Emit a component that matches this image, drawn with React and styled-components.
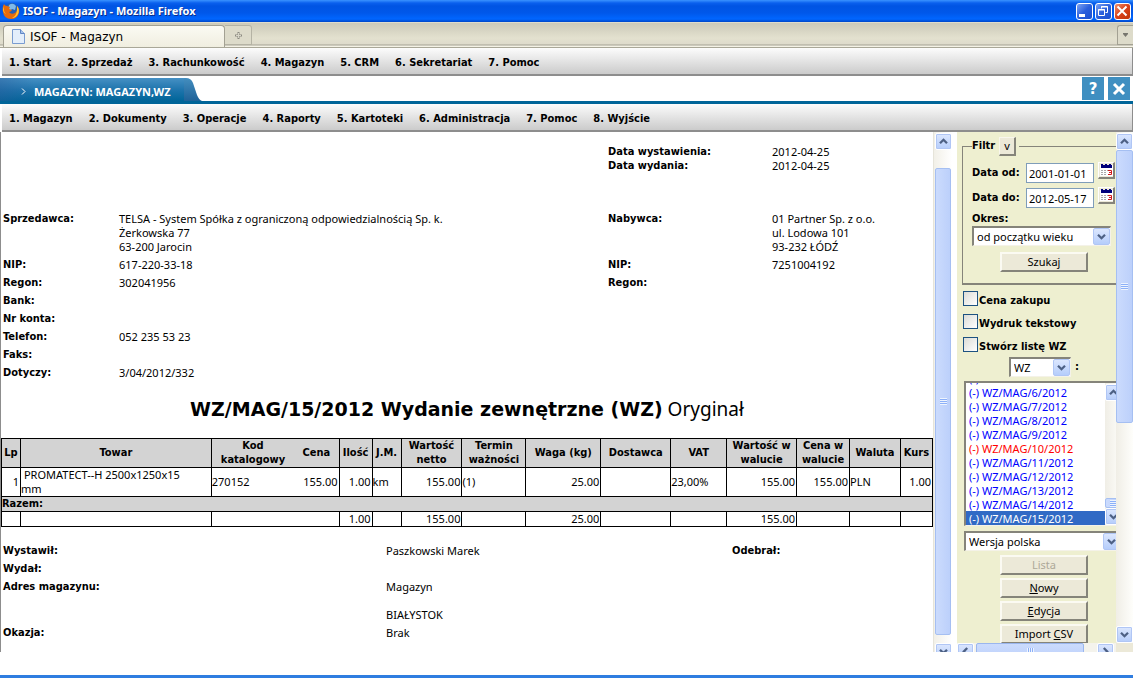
import { Fragment } from "react";
import styled, { createGlobalStyle } from "styled-components";

const REGULAR = '"Noto Sans", sans-serif';
const BOLD = '"DejaVu Sans Condensed", "DejaVu Sans", sans-serif';

const MAIN_MENU = ["Start", "Sprzedaż", "Rachunkowość", "Magazyn", "CRM", "Sekretariat", "Pomoc"];
const MODULE_MENU = ["Magazyn", "Dokumenty", "Operacje", "Raporty", "Kartoteki", "Administracja", "Pomoc", "Wyjście"];

const DATES = [
    ["Data wystawienia:", "2012-04-25"],
    ["Data wydania:", "2012-04-25"],
];

const PARTIES = [
    ["Sprzedawca:", ["TELSA - System Spółka z ograniczoną odpowiedzialnością Sp. k.", "Żerkowska 77", "63-200 Jarocin"],
        "Nabywca:", ["01 Partner Sp. z o.o.", "ul. Lodowa 101", "93-232 ŁÓDŹ"]],
    ["NIP:", ["617-220-33-18"], "NIP:", ["7251004192"]],
    ["Regon:", ["302041956"], "Regon:", []],
    ["Bank:", [], "", []],
    ["Nr konta:", [], "", []],
    ["Telefon:", ["052 235 53 23"], "", []],
    ["Faks:", [], "", []],
    ["Dotyczy:", ["3/04/2012/332"], "", []],
];

const COLUMNS = [
    { label: "Lp", width: 19 },
    { label: "Towar", width: 191 },
    { label: "Kod katalogowy", width: 83, open: true },
    { label: "Cena", width: 45 },
    { label: "Ilość", width: 33 },
    { label: "J.M.", width: 29 },
    { label: "Wartość netto", width: 61 },
    { label: "Termin ważności", width: 64 },
    { label: "Waga (kg)", width: 75 },
    { label: "Dostawca", width: 70 },
    { label: "VAT", width: 56 },
    { label: "Wartość w walucie", width: 70 },
    { label: "Cena w walucie", width: 53 },
    { label: "Waluta", width: 51 },
    { label: "Kurs", width: 32 },
];
const TABLE_WIDTH = COLUMNS.reduce((sum, c) => sum + c.width, 0);
const NUMERIC = [0, 3, 4, 6, 8, 11, 12, 14];

const ITEM = ["1", "PROMATECT--H 2500x1250x15\nmm", "270152", "155.00", "1.00", "km", "155.00", "(1)", "25.00", "", "23,00%", "155.00", "155.00", "PLN", "1.00"];
const TOTALS = ["", "", "", "", "1.00", "", "155.00", "", "25.00", "", "", "155.00", "", "", ""];

const DOCUMENTS = [5, 6, 7, 8, 9, 10, 11, 12, 13, 14, 15];

const Arrow = ({ dir }) => {
    const turn = { up: 0, right: 90, down: 180, left: 270 }[dir];
    return (
        <svg width="9" height="9" viewBox="0 0 9 9" aria-hidden="true">
            <path d="M1 6.2 4.5 2.8 8 6.2" transform={`rotate(${turn} 4.5 4.5)`}
                fill="none" stroke="#4d6185" strokeWidth="2.3" />
        </svg>
    )
}

const VerticalScroll = ({ className, thumbStart, thumbSize, rest }) => (
    <Track className={className}>
        <ScrollButton type="button" aria-label="Przewiń w górę"><Arrow dir="up" /></ScrollButton>
        <Space $grow={thumbStart} />
        <Thumb $grow={thumbSize}><Grip /></Thumb>
        <Space $grow={rest} />
        <ScrollButton type="button" aria-label="Przewiń w dół"><Arrow dir="down" /></ScrollButton>
    </Track>
)

const Menu = ({ items, label }) => (
    <MenuBar aria-label={label}>
        {items.map((item, i) => <MenuLink href="#" key={item}>{i + 1}. {item}</MenuLink>)}
    </MenuBar>
)

const DateField = ({ id, label, value }) => (
    <FieldRow>
        <FieldLabel htmlFor={id}>{label}</FieldLabel>
        <DateInput id={id} defaultValue={value} />
        <CalendarButton type="button" aria-label={"Kalendarz " + label}>
            <svg width="13" height="13" viewBox="0 0 13 13">
                <path fill="#fff" d="M0 1h13v11H0z" />
                <path fill="#00007b" d="M1 1h11v3H1zM1 0h2v1H1zM5 0h2v1H5zM9 0h2v1H9z" />
                <path fill="#aaa" d="M1 6h2v1H1zM4 6h2v1H4zM1 8h2v1H1zM4 8h2v1H4zM1 10h2v1H1zM4 10h2v1H4zM7 6h1v1H7z" />
                <path fill="none" stroke="#d31818" d="M8 6.5h3.5v4H8M9 8.5h2" />
            </svg>
        </CalendarButton>
    </FieldRow>
)

const DropDown = ({ label, options, size }) => (
    <SelectBox $size={size}>
        <Select aria-label={label}>
            {options.map(o => <option key={o}>{o}</option>)}
        </Select>
        <SelectArrow><Arrow dir="down" /></SelectArrow>
    </SelectBox>
)

const Cells = ({ values }) => values.map((value, i) => (
    <Cell key={COLUMNS[i].label} $right={NUMERIC.includes(i)} $open={COLUMNS[i].open} $indent={i === 1}>
        {value}
    </Cell>
))

const DocumentView = () => (
    <Paper>
        <InfoGrid $top={13}>
            {DATES.map(([label, value]) => (
                <Fragment key={label}>
                    <DateLabel>{label}</DateLabel>
                    <dd>{value}</dd>
                </Fragment>
            ))}
        </InfoGrid>
        <InfoGrid $top={39} $gap={4}>
            {PARTIES.map(([label, lines, label2, lines2]) => (
                <Fragment key={label}>
                    <dt>{label}</dt>
                    <dd>{lines.map(l => <div key={l}>{l}</div>)}</dd>
                    <dt>{label2}</dt>
                    <dd>{lines2.map(l => <div key={l}>{l}</div>)}</dd>
                </Fragment>
            ))}
        </InfoGrid>
        <DocTitle><b>WZ/MAG/15/2012 Wydanie zewnętrzne (WZ)</b> Oryginał</DocTitle>
        <ItemTable>
            <colgroup>
                {COLUMNS.map(c => <col key={c.label} style={{ width: (c.width / TABLE_WIDTH) * 100 + "%" }} />)}
            </colgroup>
            <thead>
                <TableRow $height={29}>
                    {COLUMNS.map(c => <HeadCell key={c.label} $open={c.open}>{c.label}</HeadCell>)}
                </TableRow>
            </thead>
            <tbody>
                <TableRow $height={29}><Cells values={ITEM} /></TableRow>
                <TableRow $height={15}><SumCell colSpan={COLUMNS.length}>Razem:</SumCell></TableRow>
                <TableRow $height={15}><Cells values={TOTALS} /></TableRow>
            </tbody>
        </ItemTable>
        <SignGrid>
            <dt>Wystawił:</dt><dd>Paszkowski Marek</dd><dt>Odebrał:</dt>
            <dt>Wydał:</dt><dd></dd><dt></dt>
            <dt>Adres magazynu:</dt><dd><div>Magazyn</div><br /><div>BIAŁYSTOK</div></dd><dt></dt>
            <dt>Okazja:</dt><dd>Brak</dd><dt></dt>
        </SignGrid>
    </Paper>
)

const SidePanel = () => (
    <Panel>
        <Filter>
            <legend>Filtr <SmallButton type="button">v</SmallButton></legend>
            <DateField id="from" label="Data od:" value="2001-01-01" />
            <DateField id="to" label="Data do:" value="2012-05-17" />
            <PeriodLabel>Okres:</PeriodLabel>
            <DropDown label="Okres" size="period" options={["od początku wieku"]} />
            <PanelButton type="button" $inset>Szukaj</PanelButton>
        </Filter>
        <Checks>
            {["Cena zakupu", "Wydruk tekstowy", "Stwórz listę WZ"].map(text => (
                <CheckLabel key={text}><CheckBox type="checkbox" />{text}</CheckLabel>
            ))}
        </Checks>
        <TypeRow><DropDown label="Typ dokumentu" size="type" options={["WZ"]} /> :</TypeRow>
        <ListFrame>
            <DocList size={10} defaultValue="15" aria-label="Dokumenty">
                {DOCUMENTS.map(n => (
                    <DocOption key={n} value={String(n)} $red={n === 10}>(-) WZ/MAG/{n}/2012</DocOption>
                ))}
            </DocList>
            <VerticalScroll thumbStart={98} thumbSize={8} rest={0} />
        </ListFrame>
        <DropDown label="Wersja" size="version" options={["Wersja polska"]} />
        <Actions>
            <PanelButton type="button" disabled>Lista</PanelButton>
            <PanelButton type="button"><u>N</u>owy</PanelButton>
            <PanelButton type="button"><u>E</u>dycja</PanelButton>
            <PanelButton type="button">Import <u>C</u>SV</PanelButton>
        </Actions>
    </Panel>
)

export default function App() {
    return (
        <Page>
            <GlobalStyle />
            <TitleBar>
                <svg width="18" height="18" viewBox="0 0 18 18" aria-hidden="true">
                    <circle cx="9.5" cy="8" r="7" fill="#245fb5" />
                    <path d="M7 3q4-3 7 1l-1 4-3-1-2 2-2-2z" fill="#7fb9e8" />
                    <path d="M2 2q1 2 3 2l3 1-1 2 3 1q-1 2-3 2 2 3 6 1 3-2 2-7 3 3 2 7-2 6-8 6-7 0-8-7Q0 5 2 2z" fill="#e66b0e" />
                    <path d="M2 4q-1 5 2 8-3-1-3-5zM15 4q3 3 1 8-2 4-6 4 5-3 5-8z" fill="#ffc432" />
                </svg>
                <WindowTitle>ISOF - Magazyn - Mozilla Firefox</WindowTitle>
                <WindowButton type="button" aria-label="Minimalizuj">
                    <svg width="14" height="14" viewBox="0 0 14 14"><path fill="#fff" d="M2 10h6v3H2z" /></svg>
                </WindowButton>
                <WindowButton type="button" aria-label="Przywróć">
                    <svg width="14" height="14" viewBox="0 0 14 14" fill="none" stroke="#fff">
                        <path d="M5.500 4.500v-2h6v6h-2" /><path d="M5 3h7" /><path d="M2.500 5.500h6v6h-6zM2 6h7" />
                    </svg>
                </WindowButton>
                <WindowButton type="button" aria-label="Zamknij" $close>
                    <svg width="14" height="14" viewBox="0 0 14 14"><path stroke="#fff" strokeWidth="2" d="m2.500 2.500 9 9m0-9-9 9" /></svg>
                </WindowButton>
            </TitleBar>
            <TabStrip>
                <BrowserTab type="button">
                    <svg width="13" height="15" viewBox="0 0 13 15" aria-hidden="true">
                        <path d="M.5.5h8l4 4v10H.5z" fill="#e3eefb" stroke="#7a9cd0" />
                        <path d="M8.500.5v4h4" fill="#a8c3ea" stroke="#5f86c4" />
                    </svg>
                    ISOF - Magazyn
                </BrowserTab>
                <NewTab type="button" aria-label="Nowa karta">
                    <svg width="9" height="9" viewBox="0 0 9 9"><path d="M4.500 1v7M1 4.500h7" stroke="#8b8a80" strokeWidth="2" /><path d="M4.500 2v5M2 4.500h5" stroke="#d8d6c8" /></svg>
                </NewTab>
                <TabList type="button" aria-label="Lista kart">
                    <svg width="5" height="4" viewBox="0 0 5 4"><path d="M0 0h5v1L2.500 4 0 1z" fill="#77766e" /></svg>
                </TabList>
            </TabStrip>
            <Menu items={MAIN_MENU} label="Menu główne" />
            <ModuleBar>
                <ModuleTab>
                    <svg width="5" height="7" viewBox="0 0 5 7" aria-hidden="true"><path d="m1 .5 3 3-3 3" fill="none" stroke="#fff" /></svg>
                    MAGAZYN: MAGAZYN,WZ
                </ModuleTab>
                <svg width="18" height="23" viewBox="0 0 18 23" aria-hidden="true">
                    <defs>
                        <linearGradient id="edge" x2="0" y2="1"><stop stopColor="#438ebf" /><stop offset="1" stopColor="#1f6298" /></linearGradient>
                    </defs>
                    <path d="M0 0h2q5 0 7 5l4 12q2 5 5 6H0z" fill="url(#edge)" />
                </svg>
                <ModuleButtons>
                    <SquareButton type="button" aria-label="Pomoc">?</SquareButton>
                    <SquareButton type="button" aria-label="Zamknij moduł">
                        <svg width="14" height="14" viewBox="0 0 14 14"><path stroke="#fff" strokeWidth="3" d="m2 2 10 10m0-10L2 12" /></svg>
                    </SquareButton>
                </ModuleButtons>
            </ModuleBar>
            <Menu items={MODULE_MENU} label="Menu modułu" />
            <Workspace>
                <DocumentView />
                <DocScroll thumbStart={18} thumbSize={467} rest={8} />
                <Side>
                    <SideMain>
                        <SidePanel />
                        <VerticalScroll thumbStart={0} thumbSize={272} rest={203} />
                    </SideMain>
                    <SideBottom>
                        <ScrollButton type="button" aria-label="Przewiń w lewo"><Arrow dir="left" /></ScrollButton>
                        <WideThumb><Grip $upright /></WideThumb>
                        <ScrollButton type="button" aria-label="Przewiń w prawo"><Arrow dir="right" /></ScrollButton>
                    </SideBottom>
                </Side>
            </Workspace>
            <BottomEdge />
        </Page>
    )
}

const GlobalStyle = createGlobalStyle`
    * {
        box-sizing: border-box;
    }
    body {
        margin: 0;
        background: #fff;
        color: #000;
        font: 11px/14px ${REGULAR};
    }
    button, input, select {
        font: inherit;
        color: inherit;
        margin: 0;
    }
    svg {
        display: block;
        flex: none;
    }
    dl, dd, h1 {
        margin: 0;
    }
    dt {
        font-family: ${BOLD};
        font-weight: bold;
    }
`

const Page = styled.div`
    display: flex;
    flex-direction: column;
    height: 100vh;
    overflow: hidden;
`

const TitleBar = styled.header`
    display: flex;
    flex: none;
    align-items: center;
    gap: 2px;
    height: 22px;
    padding: 0 2px;
    background: linear-gradient(#3a93ff 0, #0a60ee 3px, #0054e3 6px, #0058ea 13px, #0066ff 19px, #0046c8 22px);
`

const WindowTitle = styled.div`
    flex: 1;
    padding-left: 1px;
    color: #fff;
    font-weight: bold;
    text-shadow: 1px 1px #0a2f8c;
`

const WindowButton = styled.button`
    width: 17px;
    height: 17px;
    padding: 0;
    border: 1px solid #fff;
    border-radius: 3px;
    background: ${p => p.$close
        ? "linear-gradient(135deg, #f0906c, #d8411a 50%, #c03408)"
        : "linear-gradient(135deg, #7ea4f4, #2a5fdc 50%, #1c4fcf)"};
`

const TabStrip = styled.div`
    display: flex;
    flex: none;
    height: 26px;
    padding: 3px 0 0 3px;
    border-bottom: 1px solid #a9a798;
    background: linear-gradient(#f1efe2 0, #cdcab9 1px, #d6d4c3 8px, #e3e1cf 16px, #dedbcc 22px, #a3a193 23px, #f4f2e5 24px, #f4f2e5 25px);
`

const BrowserTab = styled.button`
    display: flex;
    align-items: center;
    gap: 5px;
    width: 222px;
    height: 22px;
    padding: 0 8px;
    border: 1px solid #a3a193;
    border-bottom: 0;
    border-radius: 4px 4px 0 0;
    background: linear-gradient(#fbfaf3, #f0eee0);
    font: 12px/16px "DejaVu Sans", sans-serif;
`

const NewTab = styled.button`
    display: grid;
    place-items: center;
    width: 27px;
    height: 20px;
    padding: 0;
    border: 1px solid #b5b3a4;
    border-left: 0;
    border-radius: 0 3px 0 0;
    background: #dddbca;
`

const TabList = styled(NewTab)`
    width: 16px;
    margin-left: auto;
    border: 1px solid #a3a193;
    border-right: 0;
    border-radius: 3px 0 0 0;
`

const MenuBar = styled.nav`
    display: flex;
    flex: none;
    align-items: center;
    gap: 16px;
    height: 28px;
    margin-left: 2px;
    padding: 3px 7px 0;
    border-right: 1px solid #8d8d8d;
    border-bottom: 2px solid #8d8d8d;
    background: linear-gradient(#fcfcfc, #cbcbcb);
`

const MenuLink = styled.a`
    color: #000;
    font-family: ${BOLD};
    font-weight: bold;
    text-decoration: none;
`

const ModuleBar = styled.div`
    display: flex;
    flex: none;
    align-items: end;
    height: 28px;
    border-bottom: 3px solid #006599;
`

const ModuleTab = styled.div`
    display: flex;
    align-items: center;
    gap: 8px;
    width: 184px;
    height: 23px;
    padding: 4px 0 0 21px;
    background:
        linear-gradient(90deg, #2a5a9a66, #2a5a9a00 34px),
        linear-gradient(#4690c4, #1f75ad 50%, #006599);
    color: #fff;
    font-weight: bold;
    white-space: nowrap;
`

const ModuleButtons = styled.div`
    display: flex;
    gap: 4px;
    margin-left: auto;
    padding: 0 3px 1px 0;
`

const SquareButton = styled.button`
    display: grid;
    place-items: center;
    width: 22px;
    height: 23px;
    padding: 0;
    border: 0;
    background: #3f8fc1;
    color: #fff;
    font: bold 15px/20px "DejaVu Sans", sans-serif;
`

const Workspace = styled.main`
    display: flex;
    flex: 1;
    min-height: 0;
    overflow: hidden;
    border-left: 1px solid #8d8d8d;
`

const Paper = styled.article`
    flex: 1;
    min-width: 0;
    overflow: hidden;
`

const InfoGrid = styled.dl`
    display: grid;
    grid-template-columns: minmax(0, 116fr) minmax(0, 489fr) minmax(0, 164fr) minmax(0, 161fr);
    row-gap: ${p => p.$gap || 0}px;
    padding: ${p => p.$top}px 0 0 2px;
`

const DateLabel = styled.dt`
    grid-column: 3;
`

const DocTitle = styled.h1`
    padding: 17px 0;
    font: 19px/24px ${REGULAR};
    text-align: center;
    b {
        font-family: "DejaVu Sans", sans-serif;
    }
`

const ItemTable = styled.table`
    width: 100%;
    table-layout: fixed;
    border-collapse: collapse;
    border: 1px solid #000;
    line-height: 14px;
`

const TableRow = styled.tr`
    height: ${p => p.$height}px;
`

const Cell = styled.td`
    padding: 0 ${p => p.$right ? 1 : 0}px 0 0;
    border: 1px solid #000;
    border-right-style: ${p => p.$open ? "hidden" : "solid"};
    text-align: ${p => p.$right ? "right" : "left"};
    text-indent: ${p => p.$indent ? 3 : 0}px;
    white-space: pre-wrap;
`

const HeadCell = styled.th`
    padding: 0;
    border: 1px solid #000;
    border-right-style: ${p => p.$open ? "hidden" : "solid"};
    background: #d3d3d3;
    font-family: ${BOLD};
`

const SumCell = styled.td`
    padding: 0;
    border: 1px solid #000;
    background: #d3d3d3;
    font-family: ${BOLD};
    font-weight: bold;
`

const SignGrid = styled.dl`
    display: grid;
    grid-template-columns: minmax(0, 383fr) minmax(0, 346fr) minmax(0, 201fr);
    row-gap: 4px;
    padding: 17px 0 0 2px;
`

const Track = styled.div`
    display: flex;
    flex: none;
    flex-direction: column;
    width: 17px;
    padding-top: 1px;
    background: linear-gradient(90deg, #f0eee6, #fefefb);
`

const DocScroll = styled(VerticalScroll)`
    width: 24px;
    padding: 1px 6px 0 1px;
    border-left: 1px solid #e6e4da;
    margin-bottom: -8px;
    background: linear-gradient(90deg, #f2f0e8, #fff 18px);
`

const Space = styled.div`
    flex: ${p => p.$grow} 1 0;
`

const ScrollButton = styled.button`
    display: grid;
    flex: none;
    place-items: center;
    width: 17px;
    height: 17px;
    padding: 0;
    border: 1px solid #fff;
    border-radius: 2px;
    box-shadow: inset 0 0 0 1px #b0c6f5;
    background: linear-gradient(#dce7fe, #b5cdfb);
`

const Thumb = styled.div`
    display: grid;
    flex: ${p => p.$grow} 1 0;
    place-items: center;
    border: 1px solid #a5bff2;
    border-radius: 2px;
    background: linear-gradient(90deg, #cbdbfd, #bcd0fb);
`

const WideThumb = styled.div`
    display: grid;
    place-items: center;
    width: 108px;
    height: 17px;
    margin: 0 13px 0 2px;
    border: 1px solid #9ab6ee;
    border-radius: 2px;
    background: linear-gradient(#cbdbfd, #bcd0fb);
`

const Grip = styled.div`
    width: 7px;
    height: 7px;
    background: repeating-linear-gradient(${p => p.$upright ? "90deg" : "180deg"}, #eef4fe 0, #eef4fe 1px, #8cb0f8 1px, #8cb0f8 2px);
`

const Side = styled.aside`
    display: flex;
    flex: none;
    flex-direction: column;
    width: 176px;
`

const SideMain = styled.div`
    display: flex;
    flex: 1;
    min-height: 0;
`

const SideBottom = styled.div`
    display: flex;
    flex: none;
    align-items: start;
    height: 9px;
    overflow: hidden;
    background: linear-gradient(90deg, #f4f3ec 159px, #ece9d8 159px);
`

const Panel = styled.form`
    flex: 1;
    min-width: 0;
    overflow: hidden;
    padding: 4px 0 0 5px;
    background: #eeefd0;
`

const Filter = styled.fieldset`
    width: 170px;
    height: 149px;
    margin: 0 0 6px;
    padding: 6px 0 0 9px;
    border: 1px solid #85847a;
    border-bottom-width: 2px;
    legend {
        display: flex;
        align-items: center;
        gap: 4px;
        height: 20px;
        padding: 0 3px 0 0;
        font-family: ${BOLD};
        font-weight: bold;
    }
`

const SmallButton = styled.button`
    width: 17px;
    height: 19px;
    padding: 0;
    border: 1px solid #f8f6ec;
    border-right: 2px solid #85847a;
    border-bottom: 2px solid #85847a;
    background: #ece9d8;
    font-family: ${REGULAR};
    font-weight: normal;
`

const FieldRow = styled.div`
    display: flex;
    align-items: center;
    height: 21px;
    margin-bottom: 4px;
`

const FieldLabel = styled.label`
    width: 54px;
    font-family: ${BOLD};
    font-weight: bold;
`

const DateInput = styled.input`
    width: 68px;
    height: 20px;
    padding: 1px 2px 0;
    border: 1px solid #7f9db9;
    border-radius: 0;
    background: #fff;
    outline: 0;
`

const CalendarButton = styled.button`
    display: grid;
    place-items: center;
    width: 17px;
    height: 17px;
    margin: 0 0 4px 4px;
    padding: 0;
    border: 1px solid #fff;
    border-right: 2px solid #85847a;
    border-bottom: 2px solid #85847a;
    background: #ece9d8;
`

const PeriodLabel = styled.div`
    font-family: ${BOLD};
    font-weight: bold;
`

const SIZES = {
    period: "width: 139px; height: 20px;",
    type: "width: 62px; height: 20px;",
    version: "width: 157px; height: 20px; margin-left: 2px;",
}

const SelectBox = styled.div`
    position: relative;
    ${p => SIZES[p.$size]}
`

const Select = styled.select`
    width: 100%;
    height: 100%;
    padding: 0 20px 0 3px;
    appearance: none;
    border: 2px solid #85847a;
    border-right: 1px solid #f4f2e8;
    border-bottom: 1px solid #f4f2e8;
    border-radius: 0;
    background: #fff;
`

const SelectArrow = styled.span`
    position: absolute;
    top: 2px;
    right: 1px;
    display: grid;
    place-items: center;
    width: 17px;
    height: 17px;
    border: 1px solid #b0c6f5;
    border-radius: 2px;
    background: linear-gradient(#dce7fe, #b5cdfb);
    pointer-events: none;
`

const PanelButton = styled.button`
    display: block;
    width: 88px;
    height: 20px;
    margin: ${p => p.$inset ? "6px 0 0 28px" : "0"};
    padding: 0;
    border: 2px solid #fbfaf2;
    border-right-color: #85847a;
    border-bottom-color: #85847a;
    background: #ece9d8;
    line-height: 16px;
    &:disabled {
        color: #aca899;
    }
`

const Checks = styled.div`
    display: flex;
    flex-direction: column;
    gap: 7px;
    padding-left: 1px;
`

const CheckLabel = styled.label`
    display: flex;
    align-items: end;
    gap: 1px;
    height: 16px;
    font-family: ${BOLD};
    font-weight: bold;
    line-height: 12px;
`

const CheckBox = styled.input`
    width: 15px;
    height: 15px;
    appearance: none;
    border: 1px solid #1d5281;
    background: linear-gradient(135deg, #dcdcd6, #fff);
    align-self: start;
`

const TypeRow = styled.div`
    display: flex;
    align-items: center;
    gap: 4px;
    padding: 4px 0 4px 47px;
    font-family: ${BOLD};
    font-weight: bold;
    select {
        font-family: ${REGULAR};
        font-weight: normal;
    }
`

const ListFrame = styled.div`
    display: flex;
    width: 158px;
    height: 145px;
    margin: 0 0 5px 2px;
    border: 2px solid #85847a;
    border-right: 0;
    border-bottom: 1px solid #f4f2e8;
    background: #fff;
`

const DocList = styled.select`
    flex: 1;
    min-width: 0;
    height: 100%;
    padding: 0;
    border: 0;
    border-radius: 0;
    outline: 0;
    background: #fff;
    scrollbar-width: none;
`

const DocOption = styled.option`
    height: 14px;
    min-height: 14px;
    padding: 0 3px;
    color: ${p => p.$red ? "#f00" : "#00f"};
    line-height: 14px;
    &:checked {
        background: #316ac5 linear-gradient(#316ac5, #316ac5);
        color: #fff;
    }
`

const Actions = styled.div`
    display: flex;
    flex-direction: column;
    gap: 3px;
    padding: 4px 0 0 38px;
`

const BottomEdge = styled.footer`
    flex: none;
    height: 26px;
    border-bottom: 3px solid #2f7de0;
`
